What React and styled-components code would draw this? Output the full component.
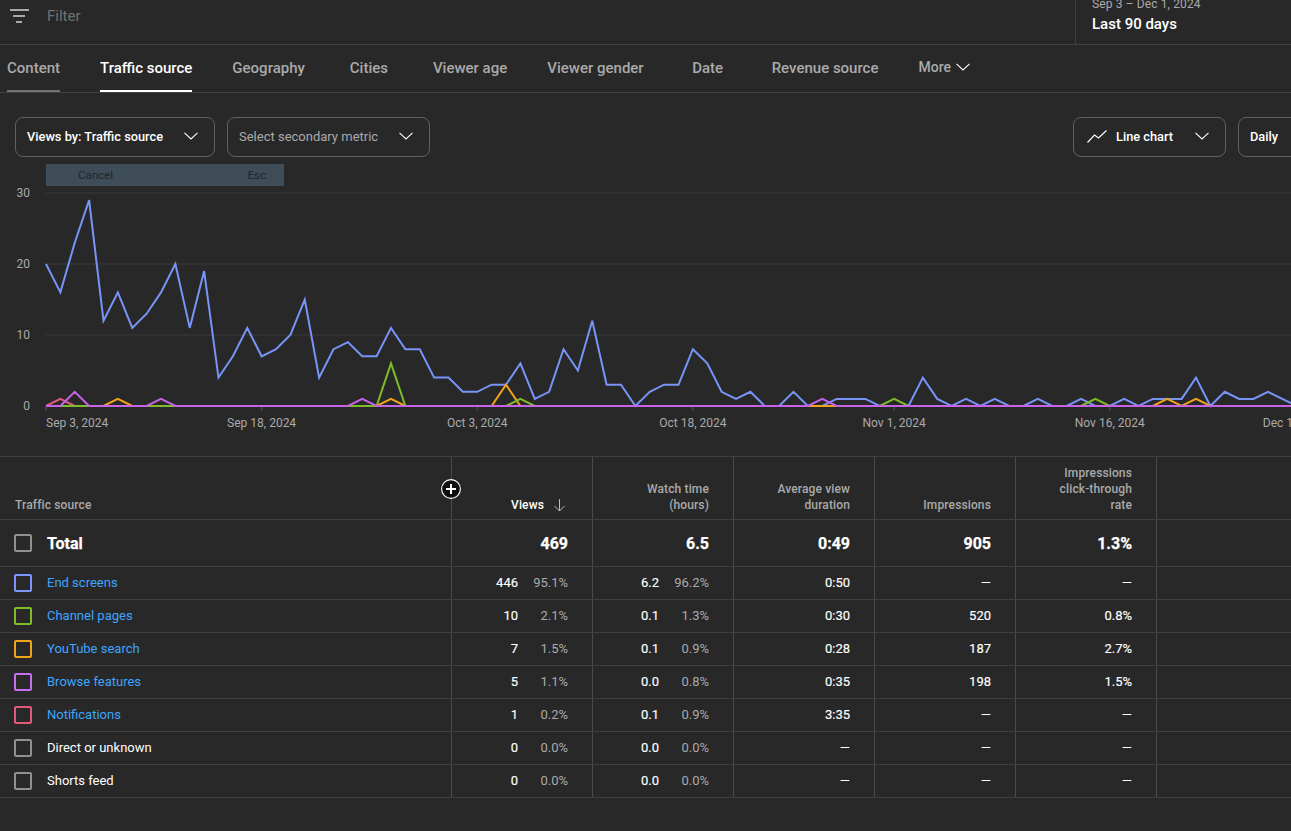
import React from "react";
import styled, { createGlobalStyle } from "styled-components";

const Global = createGlobalStyle`
  html, body { margin: 0; padding: 0; background: #282828; overflow: hidden; }
  body { width: 1291px; height: 831px; font-family: Roboto, "Liberation Sans", sans-serif; color: #fff; }
  * { box-sizing: border-box; }
`;

const Page = styled.div`
  width: 1291px;
  height: 831px;
  overflow: hidden;
  background: #282828;
`;

const TopBar = styled.header`
  height: 45px;
  display: flex;
  align-items: stretch;
  justify-content: space-between;
  border-bottom: 1px solid #3f3f3f;
`;
const FilterBox = styled.div`
  display: flex;
  align-items: flex-start;
  gap: 18px;
  padding: 9px 0 0 10px;
`;
const FilterText = styled.span`
  font-size: 15px;
  line-height: 14px;
  color: #717171;
`;
const DateBox = styled.div`
  width: 216px;
  border-left: 1px solid #3f3f3f;
  padding: 0 0 10px 16px;
  display: flex;
  flex-direction: column;
  justify-content: flex-end;
`;
const DateRange = styled.span`
  font-size: 12px;
  line-height: 20px;
  letter-spacing: 0.12px;
  color: #aaa;
  white-space: nowrap;
`;
const DateLabel = styled.span`
  font-size: 15px;
  line-height: 20px;
  font-weight: 500;
  color: #fff;
`;

const Tabs = styled.nav`
  height: 48px;
  display: flex;
  gap: 40px;
  padding-left: 7px;
  border-bottom: 1px solid #3f3f3f;
`;
const Tab = styled.div`
  min-width: 48px;
  height: 47px;
  display: flex;
  align-items: center;
  justify-content: center;
  gap: 5px;
  font-size: 15px;
  font-weight: 500;
  white-space: nowrap;
  color: ${(p) => (p.$active ? "#fff" : "#aaa")};
  border-bottom: 2px solid ${(p) => (p.$active ? "#fff" : p.$hover ? "#717171" : "transparent")};
`;
const MoreTab = styled(Tab)`
  font-size: 14px;
  padding-bottom: 1px;
`;

const Controls = styled.div`
  display: flex;
  justify-content: space-between;
  padding: 24px 0 0 15px;
`;
const ControlGroup = styled.div`
  display: flex;
  gap: 12px;
  margin-right: ${(p) => p.$bleed || 0}px;
`;
const Select = styled.div`
  height: 40px;
  width: ${(p) => p.$w}px;
  display: flex;
  align-items: center;
  justify-content: space-between;
  padding: 0 ${(p) => p.$pr || 16}px 2px ${(p) => p.$pl || 11}px;
  border: 1px solid #606060;
  border-radius: 8px;
  font-size: ${(p) => (p.$muted ? "13px" : "12.8px")};
  font-weight: ${(p) => (p.$muted ? 400 : 500)};
  color: ${(p) => (p.$muted ? "#aaa" : "#fff")};
  white-space: nowrap;
`;
const SelectLabel = styled.span`
  display: flex;
  align-items: center;
  gap: 9px;
`;

const ChartWrap = styled.div`
  position: relative;
  height: 299px;
`;
const ChartSvg = styled.svg`
  display: block;
`;
const AxisText = styled.text`
  font-family: Roboto, "Liberation Sans", sans-serif;
  font-size: 12px;
  fill: #aaa;
`;
const CancelHint = styled.div`
  position: absolute;
  left: 46px;
  top: 7px;
  width: 238px;
  height: 22px;
  display: flex;
  align-items: center;
  justify-content: space-between;
  padding: 0 18px 1px 32px;
  background: #3f4d58;
  color: #1b2730;
  font-size: 11.5px;
`;

const Table = styled.section`
  border-top: 1px solid #3f3f3f;
`;
const Row = styled.div`
  display: grid;
  grid-template-columns: 451px repeat(5, 141px) 1fr;
  height: ${(p) => p.$h}px;
  border-bottom: 1px solid #3f3f3f;
`;
const NameCell = styled.div`
  position: relative;
  display: flex;
  align-items: ${(p) => (p.$head ? "flex-end" : "center")};
  gap: 14px;
  padding-left: 15px;
  padding-bottom: ${(p) => (p.$head ? "6px" : "0")};
`;
const CheckSlot = styled.span`
  display: flex;
  margin-left: -1px;
  margin-right: 1px;
`;
const Cell = styled.div`
  display: flex;
  align-items: ${(p) => (p.$head ? "flex-end" : "center")};
  justify-content: flex-end;
  padding-right: 24px;
  padding-bottom: ${(p) => (p.$head ? "6px" : p.$small ? "2px" : "0")};
  border-left: 1px solid #4a4a4a;
`;
const HeadLabel = styled.span`
  font-size: 12px;
  line-height: 16px;
  font-weight: 500;
  letter-spacing: 0.13px;
  color: #aaa;
  text-align: right;
  white-space: pre-line;
`;
const HeadName = styled(HeadLabel)`
  text-align: left;
`;
const HeadActive = styled.span`
  display: flex;
  align-items: center;
  gap: 9px;
  margin-right: 2px;
  font-size: 12px;
  line-height: 16px;
  font-weight: 500;
  letter-spacing: 0.13px;
  color: #fff;
`;
const AddColumn = styled.svg`
  position: absolute;
  right: -10px;
  top: 22px;
`;
const Check = styled.span`
  flex: none;
  width: 18px;
  height: 18px;
  border: 2px solid ${(p) => p.$color};
  border-radius: 2px;
`;
const TotalName = styled.span`
  font-size: 16px;
  font-weight: 700;
  color: #fff;
  -webkit-text-stroke: 0.25px #fff;
`;
const TotalValue = styled(TotalName)``;
const Name = styled.span`
  font-size: 13px;
  line-height: 16px;
  margin-bottom: 1px;
  color: ${(p) => (p.$link ? "#3ea6ff" : "#fff")};
`;
const Value = styled.span`
  font-size: 13px;
  font-weight: 400;
  color: #fff;
  -webkit-text-stroke: 0.15px #fff;
`;
const Share = styled.span`
  width: 50px;
  text-align: right;
  font-size: 13px;
  color: #aaa;
`;

const Chevron = () => (
  <svg width="14" height="8" viewBox="0 0 14 8" fill="none" stroke="#fff" strokeWidth="1.1">
    <polyline points="0.5,0.8 7,7 13.5,0.8" />
  </svg>
);

const X = (i) => 46 + 14.375 * i;
const Y = (v) => 406 - 7.1 * v;

const blue = [20,16,23,29,12,16,11,13,16,20,11,19,4,7,11,7,8,10,15,4,8,9,7,7,11,8,8,4,4,2,2,3,3,6,1,2,8,5,12,3,3,0,2,3,3,8,6,2,1,2,0,0,2,0,0,1,1,1,0,0,0,4,1,0,1,0,1,0,0,1,0,0,1,0,0,1,0,1,1,1,4,0,2,1,1,2,1,0];
const sparse = (peaks) => Array.from({ length: 88 }, (_, i) => peaks[i] || 0);
const SERIES = [
  { color: "#7794f6", data: blue },
  { color: "#e25a7a", data: sparse({ 1: 1 }), from: 0, to: 2 },
  { color: "#f2a31e", data: sparse({ 5: 1, 24: 1, 32: 3, 78: 1, 80: 1 }) },
  { color: "#7fbc2b", data: sparse({ 24: 6, 33: 1, 59: 1, 73: 1 }) },
  { color: "#f2a31e", data: sparse({}), from: 53, to: 55 },
  { color: "#c564e6", data: sparse({ 2: 2, 8: 1, 22: 1, 54: 1 }) },
];

const TICKS = [
  { i: 0, label: "Sep 3, 2024", anchor: "start" },
  { i: 15, label: "Sep 18, 2024", anchor: "middle" },
  { i: 30, label: "Oct 3, 2024", anchor: "middle" },
  { i: 45, label: "Oct 18, 2024", anchor: "middle" },
  { i: 59, label: "Nov 1, 2024", anchor: "middle" },
  { i: 74, label: "Nov 16, 2024", anchor: "middle" },
  { i: 89, label: "Dec 1, 2024", anchor: "end" },
];

const Chart = () => (
  <ChartSvg width="1291" height="299" viewBox="0 157 1291 299">
    {[10, 20, 30].map((v) => (
      <line key={v} x1="46" x2="1291" y1={Y(v)} y2={Y(v)} stroke="#353535" strokeWidth="1.5" />
    ))}
    {[0, 10, 20, 30].map((v) => (
      <AxisText key={v} x="30" y={Y(v) + 4} textAnchor="end">{v}</AxisText>
    ))}
    {TICKS.map((t) => (
      <React.Fragment key={t.i}>
        <line x1={X(t.i)} x2={X(t.i)} y1="406" y2="411" stroke="#555" />
        <AxisText x={X(t.i)} y="427" textAnchor={t.anchor}>{t.label}</AxisText>
      </React.Fragment>
    ))}
    {SERIES.map((s, n) => (
      <polyline
        key={n}
        fill="none"
        stroke={s.color}
        strokeWidth="2"
        strokeLinejoin="miter"
        points={s.data
          .map((v, i) => [i, v])
          .filter(([i]) => (s.from === undefined ? true : i >= s.from && i <= s.to))
          .map(([i, v]) => `${X(i)},${Y(v)}`)
          .join(" ")}
      />
    ))}
  </ChartSvg>
);

const HEADERS = ["Watch time\n(hours)", "Average view\nduration", "Impressions", "Impressions\nclick-through\nrate"];

const ROWS = [
  { name: "End screens", color: "#7c96ff", link: true, v: ["446", "95.1%"], w: ["6.2", "96.2%"], d: "0:50", i: "—", c: "—" },
  { name: "Channel pages", color: "#7fbc2b", link: true, v: ["10", "2.1%"], w: ["0.1", "1.3%"], d: "0:30", i: "520", c: "0.8%" },
  { name: "YouTube search", color: "#f2a31e", link: true, v: ["7", "1.5%"], w: ["0.1", "0.9%"], d: "0:28", i: "187", c: "2.7%" },
  { name: "Browse features", color: "#c46ff0", link: true, v: ["5", "1.1%"], w: ["0.0", "0.8%"], d: "0:35", i: "198", c: "1.5%" },
  { name: "Notifications", color: "#e25a7a", link: true, v: ["1", "0.2%"], w: ["0.1", "0.9%"], d: "3:35", i: "—", c: "—" },
  { name: "Direct or unknown", color: "#909090", v: ["0", "0.0%"], w: ["0.0", "0.0%"], d: "—", i: "—", c: "—" },
  { name: "Shorts feed", color: "#909090", v: ["0", "0.0%"], w: ["0.0", "0.0%"], d: "—", i: "—", c: "—" },
];

export default function App() {
  return (
    <Page>
      <Global />
      <TopBar>
        <FilterBox>
          <svg width="19" height="14" viewBox="0 0 19 14" stroke="#fff" strokeWidth="1.2">
            <line x1="0" x2="19" y1="1" y2="1" />
            <line x1="3" x2="15" y1="7" y2="7" />
            <line x1="6" x2="12" y1="13" y2="13" />
          </svg>
          <FilterText>Filter</FilterText>
        </FilterBox>
        <DateBox>
          <DateRange>Sep 3 – Dec 1, 2024</DateRange>
          <DateLabel>Last 90 days</DateLabel>
        </DateBox>
      </TopBar>

      <Tabs>
        <Tab $hover>Content</Tab>
        <Tab $active>Traffic source</Tab>
        <Tab>Geography</Tab>
        <Tab>Cities</Tab>
        <Tab>Viewer age</Tab>
        <Tab>Viewer gender</Tab>
        <Tab>Date</Tab>
        <Tab>Revenue source</Tab>
        <MoreTab>More <Chevron /></MoreTab>
      </Tabs>

      <Controls>
        <ControlGroup>
          <Select $w={200}>Views by: Traffic source <Chevron /></Select>
          <Select $w={203} $muted>Select secondary metric <Chevron /></Select>
        </ControlGroup>
        <ControlGroup $bleed={-48}>
          <Select $w={153} $pl={13}>
            <SelectLabel>
              <svg width="20" height="13" viewBox="0 0 20 13" fill="none" stroke="#fff" strokeWidth="1.1">
                <polyline points="0.5,12.5 7.5,5 11.5,8 19.5,0.5" />
              </svg>
              Line chart
            </SelectLabel>
            <Chevron />
          </Select>
          <Select $w={101}>Daily</Select>
        </ControlGroup>
      </Controls>

      <ChartWrap>
        <Chart />
        <CancelHint><span>Cancel</span><span>Esc</span></CancelHint>
      </ChartWrap>

      <Table>
        <Row $h={63}>
          <NameCell $head>
            <HeadName>Traffic source</HeadName>
            <AddColumn width="20" height="20" viewBox="0 0 20 20">
              <circle cx="10" cy="10" r="9.4" fill="#0f0f0f" stroke="#fff" strokeWidth="1.1" />
              <path d="M10 5v10M5 10h10" stroke="#fff" strokeWidth="2" />
            </AddColumn>
          </NameCell>
          <Cell $head>
            <HeadActive>
              Views
              <svg width="13" height="14" viewBox="0 0 13 14" fill="none" stroke="#bbb" strokeWidth="1">
                <path d="M6.5 1v12M1.5 8l5 5 5-5" />
              </svg>
            </HeadActive>
          </Cell>
          {HEADERS.map((h) => (
            <Cell $head key={h}><HeadLabel>{h}</HeadLabel></Cell>
          ))}
          <Cell $head />
        </Row>

        <Row $h={47}>
          <NameCell>
            <CheckSlot><Check $color="#909090" /></CheckSlot>
            <TotalName>Total</TotalName>
          </NameCell>
          {["469", "6.5", "0:49", "905", "1.3%"].map((t) => (
            <Cell key={t}><TotalValue>{t}</TotalValue></Cell>
          ))}
          <Cell />
        </Row>

        {ROWS.map((r) => (
          <Row $h={33} key={r.name}>
            <NameCell>
              <CheckSlot><Check $color={r.color} /></CheckSlot>
              <Name $link={r.link}>{r.name}</Name>
            </NameCell>
            <Cell $small><Value>{r.v[0]}</Value><Share>{r.v[1]}</Share></Cell>
            <Cell $small><Value>{r.w[0]}</Value><Share>{r.w[1]}</Share></Cell>
            <Cell $small><Value>{r.d}</Value></Cell>
            <Cell $small><Value>{r.i}</Value></Cell>
            <Cell $small><Value>{r.c}</Value></Cell>
            <Cell />
          </Row>
        ))}
      </Table>
    </Page>
  );
}
